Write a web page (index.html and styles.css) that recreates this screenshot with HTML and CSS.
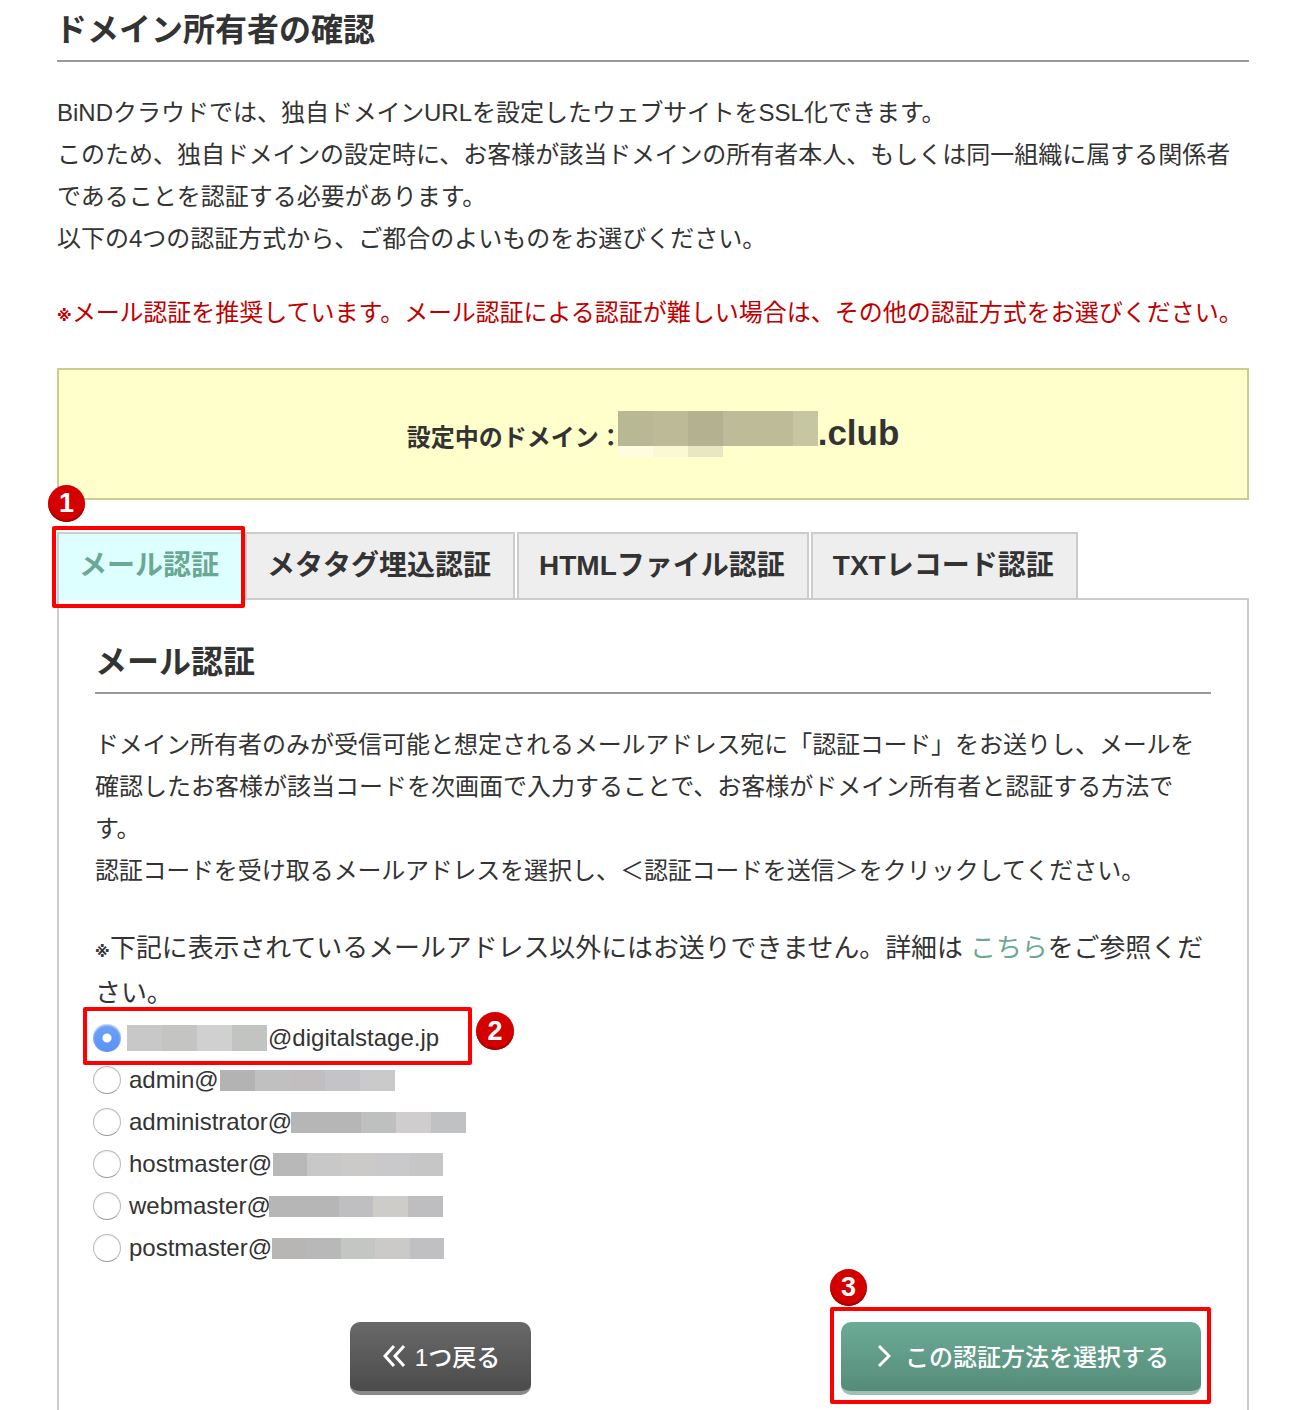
FILE: index.html
```html
<html>
    <head>
        <meta charset="utf-8">
        <link rel="stylesheet" href="styles.css">
    </head>
    <body>
        <div class="page">
            <h2 class="title">ドメイン所有者の確認</h2>
            <p class="text intro">BiNDクラウドでは、独自<span class="kn">ドメイン</span>URLを設定した<span class="kn">ウェブサイト</span>をSSL化できます。<br>このため、独自<span class="kn">ドメイン</span>の設定時に、お客様が該当<span class="kn">ドメイン</span>の所有者本人、もしくは同一組織に属する関係者<br>であることを認証する必要があります。<br>以下の4つの認証方式から、ご都合のよいものをお選びください。</p>
            <p class="text alert"><span class="kome">※</span><span class="kn">メール</span>認証を推奨しています。<span class="kn">メール</span>認証による認証が難しい場合は、その他の認証方式をお選びください。</p>

            <div class="domain-box">
                <span class="domain-label">設定中のドメイン：</span><span class="mask mask-domain"></span><span class="domain-tld">.club</span>
            </div>

            <div class="tabs">
                <div class="tab active">メール認証</div>
                <div class="tab">メタタグ埋込認証</div>
                <div class="tab">HTMLファイル認証</div>
                <div class="tab">TXTレコード認証</div>
                <div class="mark mark-tab"></div>
                <div class="badge badge-1">1</div>
            </div>

            <div class="panel">
                <h3 class="title">メール認証</h3>
                <p class="text desc"><span class="kn">ドメイン</span>所有者のみが受信可能と想定される<span class="kn">メールアドレス</span>宛に「<span class="kn">認証コード</span>」をお送りし、<span class="kn">メール</span>を<br>確認したお客様が該当コードを次画面で入力することで、お客様がドメイン所有者と認証する方法で<br>す。<br><span class="kn">認証コード</span>を受け取る<span class="kn">メールアドレス</span>を選択し、＜<span class="kn">認証コード</span>を送信＞をクリックしてください。</p>
                <p class="text note"><span class="kome">※</span>下記に表示されているメールアドレス以外にはお送りできません。詳細は <a class="link">こちら</a>をご参照くだ<br>さい。</p>

                <div class="radios">
                    <label class="radio"><input type="radio" name="mail" checked><span class="mask mask-a"></span>@digitalstage.jp</label>
                    <label class="radio"><input type="radio" name="mail">admin@<span class="mask mask-b"></span></label>
                    <label class="radio"><input type="radio" name="mail">administrator@<span class="mask mask-c"></span></label>
                    <label class="radio"><input type="radio" name="mail">hostmaster@<span class="mask mask-d"></span></label>
                    <label class="radio"><input type="radio" name="mail">webmaster@<span class="mask mask-e"></span></label>
                    <label class="radio"><input type="radio" name="mail">postmaster@<span class="mask mask-f"></span></label>
                    <div class="mark mark-radio"></div>
                    <div class="badge badge-2">2</div>
                </div>

                <div class="buttons">
                    <button class="button back">
                        <svg width="24" height="24" viewBox="0 0 24 24" fill="none" stroke="#fff" stroke-width="3"><path d="M11 2 L2 12 L11 22"/><path d="M21 2 L12 12 L21 22"/></svg>
                        1つ戻る
                    </button>
                    <button class="button next">
                        <svg width="14" height="24" viewBox="0 0 14 24" fill="none" stroke="#fff" stroke-width="3"><path d="M2 2 L12 12 L2 22"/></svg>
                        この認証方法を選択する
                    </button>
                    <div class="mark mark-button"></div>
                    <div class="badge badge-3">3</div>
                </div>
            </div>
        </div>
    </body>
</html>
```

FILE: styles.css
```css
html, body {
    margin: 0;
    height: 1410px;
    overflow: hidden;
    background: #fff;
}

body {
    font-family: "Liberation Sans", "Noto Sans CJK JP", sans-serif;
    color: #333;
}

.page {
    padding: 0 57px;
}

.title {
    margin: 0;
    height: 60px;
    line-height: 60px;
    font-size: 32px;
    font-weight: bold;
    text-indent: -2px;
    border-bottom: 2px solid #999;
}

.text {
    margin: 0;
    font-size: 24px;
    line-height: 42px;
}

.kn {
    letter-spacing: -0.25px;
}

.intro {
    margin-top: 30px;
}

.alert {
    margin-top: 32px;
    color: #c00000;
}

.kome {
    display: inline-block;
    width: 15px;
    font-family: "DejaVu Sans", sans-serif;
    font-size: 15px;
    font-weight: bold;
    line-height: 0;
}

.domain-box {
    margin-top: 34px;
    height: 132px;
    box-sizing: border-box;
    display: flex;
    align-items: center;
    justify-content: center;
    background: #ffc;
    border: 2px solid #cccc8f;
    padding-bottom: 2px;
}

.domain-label {
    font-size: 24px;
    font-weight: bold;
    margin-top: 4px;
    margin-right: -5px;
}

.domain-tld {
    font-size: 35px;
    font-weight: bold;
}

.mask {
    display: inline-block;
    flex: none;
}

.mask-domain {
    width: 200px;
    height: 46px;
    margin-top: 2px;
    background:
        linear-gradient(90deg, #b9b894 0 35px, #bdbb97 35px 70px, #b3b18f 70px 105px, #bdbb98 105px 175px, #c7c6a3 175px) top / 100% 35px no-repeat,
        linear-gradient(90deg, #fffde0 0 35px, #fbf9d5 35px 70px, #e9e7c3 70px 105px, transparent 105px);
}

.mask-a {
    width: 140px;
    height: 26px;
    margin-left: -2px;
    margin-right: 1px;
    background: linear-gradient(90deg, #c8c8c8 0 25%, #c4c4c2 25% 50%, #d0d0d0 50% 75%, #c2c4c2 75%);
}

.mask-b {
    width: 175px;
    height: 21px;
    margin-left: 1px;
    background: linear-gradient(90deg, #b2b3b2 0 20%, #c0c0c0 20% 40%, #c0bebe 40% 60%, #c4c4c6 60% 80%, #cacaca 80%);
}

.mask-c {
    width: 175px;
    height: 21px;
    margin-left: -1px;
    background: linear-gradient(90deg, #b6b6b6 0 40%, #bec0c0 40% 60%, #cfcdcd 60% 80%, #c0c1c3 80%);
}

.mask-d {
    width: 170px;
    height: 23px;
    margin-left: 1px;
    background: linear-gradient(90deg, #b8b8b8 0 20%, #c8c8c8 20% 40%, #cbcac8 40% 60%, #c9c9cb 60% 80%, #c6c6c6 80%);
}

.mask-e {
    width: 174px;
    height: 21px;
    margin-left: -2px;
    background: linear-gradient(90deg, #b6b6b6 0 40%, #bfbfc1 40% 60%, #cdccc9 60% 80%, #bebec0 80%);
}

.mask-f {
    width: 172px;
    height: 21px;
    background: linear-gradient(90deg, #b8b6b4 0 20%, #b8b8b8 20% 40%, #c4c6c4 40% 60%, #ccc9c9 60% 80%, #c0c0c2 80%);
}

.tabs {
    position: relative;
    display: flex;
    gap: 2px;
    margin-top: 32px;
    margin-bottom: -2px;
}

.tab {
    height: 68px;
    box-sizing: border-box;
    line-height: 64px;
    padding: 0 22px 0 20px;
    font-size: 28px;
    font-weight: bold;
    background: #eee;
    border: 2px solid #ccc;
}

.tab.active {
    background: #dff;
    color: #6aa893;
    border-bottom: none;
    position: relative;
    z-index: 1;
}

.panel {
    border: 2px solid #ccc;
    border-bottom: none;
    padding: 32px 36px 60px;
}

.panel .title {
    text-indent: 0;
}

.desc {
    margin-top: 30px;
}

.note {
    margin-top: 34px;
    line-height: 45px;
    font-size: 25.9px;
    white-space: nowrap;
}

.link {
    color: #6aa893;
}

.radios {
    position: relative;
    margin-top: 1px;
}

.radio {
    display: flex;
    align-items: center;
    height: 42px;
    font-size: 24px;
    margin-left: -2px;
}

.radio input {
    appearance: none;
    flex: none;
    width: 28px;
    height: 28px;
    box-sizing: border-box;
    margin: 0 8px 0 0;
    background: #fff;
    border: 1px solid #bbb;
    border-bottom-color: #999;
    border-radius: 50%;
    box-shadow: inset 0 1px 2px #eee;
}

.radio input:checked {
    border: none;
    background: radial-gradient(circle, #fff 0 4px, transparent 5px), linear-gradient(#6da2f8, #5a92f5);
}

.buttons {
    position: relative;
    display: flex;
    justify-content: space-between;
    margin-top: 53px;
    padding: 0 10px 0 255px;
}

.button {
    display: flex;
    align-items: center;
    justify-content: center;
    gap: 8px;
    height: 73px;
    box-sizing: border-box;
    padding: 0 0 2px 2px;
    color: #fff;
    font-family: inherit;
    font-size: 24px;
    font-weight: 500;
    border: none;
    border-radius: 10px;
}

.back {
    width: 181px;
    background: linear-gradient(#696969, #4b4b4b);
    border-bottom: 4px solid #8a8a8a;
}

.next {
    width: 360px;
    gap: 14px;
    padding-left: 4px;
    background: linear-gradient(#6cab97, #558c79);
    border-bottom: 4px solid #9cc0b3;
}

.mark {
    position: absolute;
    box-sizing: border-box;
    border: 4px solid #f00;
    border-radius: 2px;
    z-index: 2;
}

.mark-tab {
    left: -5px;
    top: -6px;
    width: 193px;
    height: 82px;
}

.mark-radio {
    left: -12px;
    top: -10px;
    width: 389px;
    height: 58px;
}

.mark-button {
    left: 735px;
    top: -15px;
    width: 381px;
    height: 97px;
}

.badge {
    position: absolute;
    width: 37px;
    height: 37px;
    line-height: 37px;
    border-radius: 50%;
    text-align: center;
    font-size: 27px;
    font-weight: bold;
    color: #fff;
    background: #d40000;
    box-shadow: inset 0 -2px 2px #a00000;
    z-index: 3;
}

.badge-1 {
    left: -9px;
    top: -47px;
}

.badge-2 {
    left: 381px;
    top: -5px;
    width: 38px;
    height: 38px;
    line-height: 38px;
}

.badge-3 {
    left: 735px;
    top: -53px;
}
```
